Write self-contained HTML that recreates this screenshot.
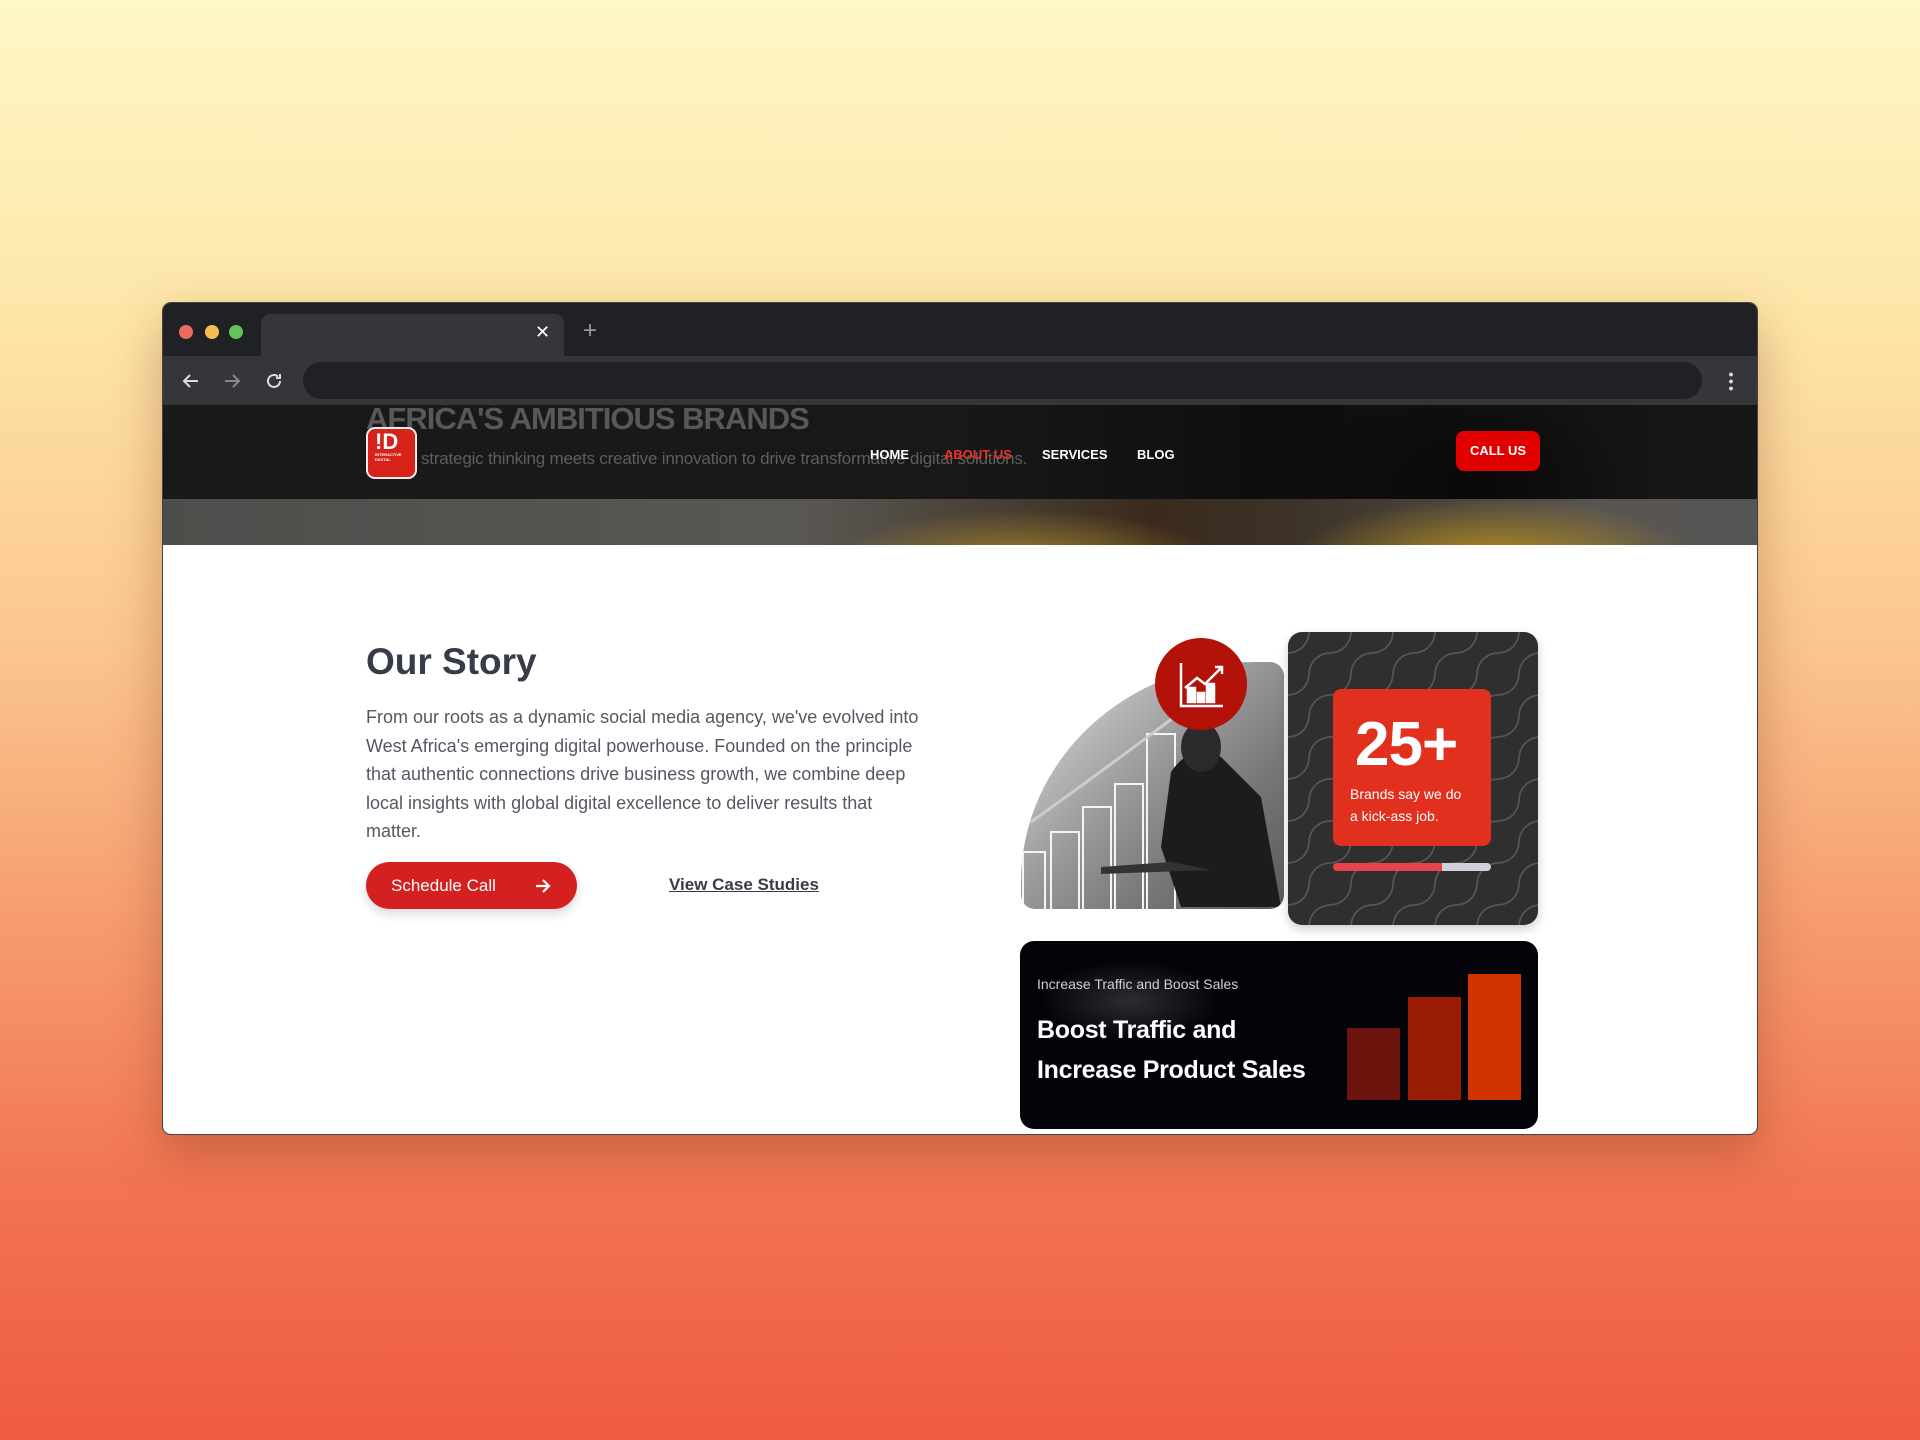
<!DOCTYPE html>
<html><head><meta charset="utf-8"><style>
*{margin:0;padding:0;box-sizing:border-box}
html,body{width:1920px;height:1440px;overflow:hidden}
body{font-family:"Liberation Sans",sans-serif;background:linear-gradient(180deg,#fff7c6 0%,#fde6a8 22%,#fbc58f 45%,#f69a6e 65%,#f27553 82%,#ee5a42 100%);position:relative}
.win{position:absolute;left:162px;top:302px;width:1596px;height:833px;border-radius:9px;overflow:hidden;background:#fff;box-shadow:0 20px 50px rgba(120,50,20,.35);border:1px solid #444}
.tabbar{position:absolute;left:0;top:0;width:100%;height:53px;background:#202124}
.dot{position:absolute;top:22px;width:14px;height:14px;border-radius:50%}
.tab{position:absolute;left:98px;top:11px;width:303px;height:42px;background:#35363a;border-radius:9px 9px 0 0}
.tool{position:absolute;left:0;top:53px;width:100%;height:49px;background:#35363a}
.addr{position:absolute;left:140px;top:6px;width:1399px;height:37px;border-radius:19px;background:#202124}
.page{position:absolute;left:0;top:102px;width:100%;height:731px}
.hdr{position:absolute;left:0;top:0;width:100%;height:140px;overflow:hidden;
background:radial-gradient(ellipse 160px 110px at 1310px 80px,#050302 0%,rgba(5,3,2,0) 100%),linear-gradient(90deg,#1d1d1d 0%,#1b1b1b 50%,#0c0a08 70%,#1a1a1a 100%)}
.strip{position:absolute;left:0;top:94px;width:100%;height:46px;
background:radial-gradient(ellipse 200px 60px at 860px 70px,#a8862a 0%,rgba(168,134,42,0) 100%),radial-gradient(ellipse 200px 60px at 1330px 60px,#b08c20 0%,rgba(176,140,32,0) 100%),linear-gradient(90deg,#4d4d4b,#5a5853 40%,#3a2a1c 62%,#3d342a 72%,#5a5550 90%,#555)}
.bigt{position:absolute;left:203px;top:-4px;font-size:31px;font-weight:700;color:#585858;letter-spacing:-1px}
.sub{position:absolute;left:258px;top:44px;font-size:17px;color:#5e5e5e;letter-spacing:-.2px}
.logo{position:absolute;left:203px;top:22px;width:51px;height:52px;border-radius:9px;background:#d62218;border:2px solid #eee;color:#fff;font-weight:900;font-size:22px;padding:3px 0 0 7px;line-height:20px}
.logo small{display:block;font-size:4px;line-height:5px;font-weight:700}
.nav{position:absolute;top:42px;font-size:13px;font-weight:700;color:#fff}
.call{position:absolute;left:1293px;top:26px;width:84px;height:40px;border-radius:8px;background:#e00000;color:#fff;font-weight:700;font-size:13px;text-align:center;line-height:40px}
.h2{position:absolute;left:203px;top:236px;font-size:37px;font-weight:700;color:#383b48}
.p{position:absolute;left:203px;top:298px;width:560px;font-size:18px;line-height:28.5px;color:#555863}
.btn{position:absolute;left:203px;top:457px;width:211px;height:47px;border-radius:24px;background:#d42020;color:#fff;font-size:17px;line-height:47px;padding-left:25px;box-shadow:0 5px 10px rgba(0,0,0,.15)}
.link{position:absolute;left:506px;top:470px;font-size:17px;font-weight:700;color:#383b48;text-decoration:underline}
.img{position:absolute;left:858px;top:257px;width:263px;height:247px;border-radius:235px 14px 14px 14px/220px 14px 14px 14px;overflow:hidden;background:linear-gradient(135deg,#e6e6e6 0%,#9a9a9a 45%,#777 70%,#5a5a5a 100%)}
.circ{position:absolute;left:992px;top:233px;width:92px;height:92px;border-radius:50%;background:#b31208}
.stat{position:absolute;left:1125px;top:227px;width:250px;height:293px;border-radius:14px;background-color:#2f2f2f;
background-image:radial-gradient(circle at 0 0,transparent 20px,#555 20px,#555 21.5px,transparent 22px),radial-gradient(circle at 100% 100%,transparent 20px,#555 20px,#555 21.5px,transparent 22px);background-size:42px 42px;box-shadow:0 4px 10px rgba(0,0,0,.2)}
.red{position:absolute;left:1170px;top:284px;width:158px;height:157px;border-radius:8px;background:#e2301f;color:#fff}
.bar{position:absolute;left:1170px;top:458px;width:158px;height:8px;border-radius:4px;background:linear-gradient(90deg,#e8424a 0,#e8424a 69%,#d0d2d8 69%)}
.blk{position:absolute;left:857px;top:840px;width:518px;height:188px;border-radius:14px;background:radial-gradient(ellipse 90px 40px at 110px 60px,#2b2d33 0%,rgba(0,0,0,0) 100%),#03040a}
</style></head><body>
<div class="win">
 <div class="tabbar">
  <div class="dot" style="left:16px;background:#ed6a5e"></div>
  <div class="dot" style="left:42px;background:#f5be4f"></div>
  <div class="dot" style="left:66px;background:#61c454"></div>
  <div class="tab"><span style="position:absolute;left:274px;top:8px;color:#fff;font-size:18px">✕</span></div>
  <span style="position:absolute;left:420px;top:14px;color:#999;font-size:24px">+</span>
 </div>
 <div class="tool">
  <svg style="position:absolute;left:18px;top:15px" width="20" height="20" viewBox="0 0 20 20" fill="none" stroke="#ddd" stroke-width="2"><path d="M17 10H3M9 4l-6 6 6 6"/></svg>
  <svg style="position:absolute;left:59px;top:15px" width="20" height="20" viewBox="0 0 20 20" fill="none" stroke="#888" stroke-width="2"><path d="M3 10h14M11 4l6 6-6 6"/></svg>
  <svg style="position:absolute;left:101px;top:15px" width="20" height="20" viewBox="0 0 20 20" fill="none" stroke="#ddd" stroke-width="2"><path d="M16 10a6 6 0 1 1-2-4.5M16 3v4h-4"/></svg>
  <div class="addr"></div>
  <div style="position:absolute;left:1566px;top:15px;width:4px;height:20px;background:radial-gradient(circle,#ddd 1.8px,transparent 2px) 0 0/4px 7px"></div>
 </div>
 <div class="page">
  <div class="hdr">
   <div class="strip"></div>
   <div style="position:absolute;left:0;top:0;width:100%;height:94px;background:rgba(20,20,20,.35)"></div>
   <div class="bigt">AFRICA'S AMBITIOUS BRANDS</div>
   <div class="sub">strategic thinking meets creative innovation to drive transformative digital solutions.</div>
   <div class="logo">!D<small>INTERACTIVE<br>DIGITAL</small></div>
   <div class="nav" style="left:707px">HOME</div>
   <div class="nav" style="left:781px;color:#e8332a">ABOUT US</div>
   <div class="nav" style="left:879px">SERVICES</div>
   <div class="nav" style="left:974px">BLOG</div>
   <div class="call">CALL US</div>
  </div>
  <div class="h2">Our Story</div>
  <div class="p">From our roots as a dynamic social media agency, we've evolved into West Africa's emerging digital powerhouse. Founded on the principle that authentic connections drive business growth, we combine deep local insights with global digital excellence to deliver results that matter.</div>
  <div class="btn">Schedule Call<svg style="position:absolute;left:168px;top:15px" width="18" height="18" viewBox="0 0 18 18" fill="none" stroke="#fff" stroke-width="2.2"><path d="M2 9h13M9 3l6 6-6 6"/></svg></div>
  <div class="link">View Case Studies</div>
  <div class="img">
   <svg width="263" height="247" style="position:absolute;left:0;top:0" fill="none" stroke="#f4f4f4" stroke-width="2">
    <rect x="2" y="190" width="22" height="60"/><rect x="30" y="170" width="28" height="80"/><rect x="62" y="145" width="28" height="105"/><rect x="94" y="122" width="28" height="128"/><rect x="126" y="72" width="28" height="178"/>
    <path d="M10 160 Q80 110 160 50" stroke="#ccc" stroke-width="3"/>
    <path d="M150 110 q20-30 50-15 l40 40 l20 110 h-100 l-20-60 z" fill="#1c1c1c" stroke="none"/>
    <ellipse cx="180" cy="85" rx="20" ry="25" fill="#2a2a2a" stroke="none"/>
    <path d="M80 205 l70-5 l40 8 l-110 4z" fill="#333" stroke="none"/>
   </svg>
  </div>
  <div class="circ"><svg width="92" height="92" viewBox="0 0 92 92" fill="none" stroke="#fff" stroke-width="2.5"><path d="M26 25v43h42"/><rect x="33" y="50" width="7" height="14" fill="#fff"/><rect x="43" y="55" width="6" height="9" fill="#fff"/><rect x="52" y="46" width="7" height="18" fill="#fff"/><path d="M30 50l12-10 8 6 16-16M60 29h7v7"/></svg></div>
  <div class="stat"></div>
  <div class="red" style="left:1170px"><div style="position:absolute;left:22px;top:20px;font-size:62px;font-weight:700;letter-spacing:-1px">25+</div><div style="position:absolute;left:17px;top:94px;font-size:14px;line-height:22px">Brands say we do<br>a kick-ass job.</div></div>
  <div class="bar"></div>
 </div>
 <div class="blk" style="top:638px;left:857px">
  <div style="position:absolute;left:17px;top:35px;font-size:14px;color:#d0d0d0">Increase Traffic and Boost Sales</div>
  <div style="position:absolute;left:17px;top:69px;font-size:25px;font-weight:700;color:#fff;line-height:40px;letter-spacing:-.3px">Boost Traffic and<br>Increase Product Sales</div>
  <div style="position:absolute;left:327px;top:87px;width:53px;height:72px;background:#6e140e"></div>
  <div style="position:absolute;left:388px;top:56px;width:53px;height:103px;background:#9b1c05"></div>
  <div style="position:absolute;left:448px;top:33px;width:53px;height:126px;background:#d23300"></div>
 </div>
</div>
</body></html>
